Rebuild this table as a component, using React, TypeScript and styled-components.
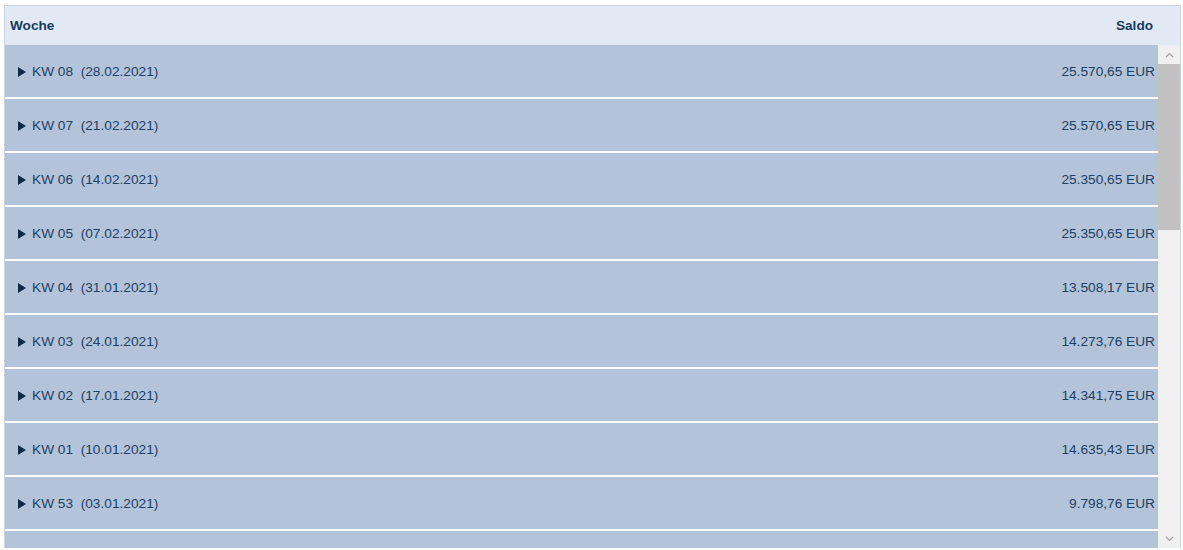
import React from "react";
import styled, { createGlobalStyle } from "styled-components";

const GlobalStyle = createGlobalStyle`
  html, body {
    margin: 0;
    padding: 0;
    background: #ffffff;
    font-family: "Liberation Sans", Arial, sans-serif;
  }
`;

interface Week {
  kw: string;
  date: string;
  saldo: string;
}

const weeks: Week[] = [
  { kw: "08", date: "28.02.2021", saldo: "25.570,65" },
  { kw: "07", date: "21.02.2021", saldo: "25.570,65" },
  { kw: "06", date: "14.02.2021", saldo: "25.350,65" },
  { kw: "05", date: "07.02.2021", saldo: "25.350,65" },
  { kw: "04", date: "31.01.2021", saldo: "13.508,17" },
  { kw: "03", date: "24.01.2021", saldo: "14.273,76" },
  { kw: "02", date: "17.01.2021", saldo: "14.341,75" },
  { kw: "01", date: "10.01.2021", saldo: "14.635,43" },
  { kw: "53", date: "03.01.2021", saldo: "9.798,76" },
  { kw: "52", date: "27.12.2020", saldo: "9.798,76" },
];

const Page = styled.div`
  padding: 5px 2px 0 4px;
`;

const Frame = styled.div`
  width: 1175px;
  height: 542px;
  border: 1px solid #c9d5e3;
  border-bottom: none;
  display: flex;
  flex-direction: column;
  overflow: hidden;
`;

const Header = styled.div`
  height: 39px;
  flex: none;
  display: flex;
  align-items: center;
  justify-content: space-between;
  padding: 0 27px 0 5px;
  background: #e1e9f4;
  color: #173b5c;
  font-size: 13.6px;
  font-weight: bold;
`;

const Body = styled.div`
  flex: 1;
  display: flex;
  min-height: 0;
`;

const List = styled.div`
  flex: 1;
  overflow: hidden;
  display: flex;
  flex-direction: column;
  gap: 2px;
`;

const Row = styled.div`
  height: 52px;
  box-sizing: border-box;
  padding: 1px 3px 0 13px;
  flex: none;
  display: flex;
  align-items: center;
  justify-content: space-between;
  background: #b3c4da;
  color: #1d4062;
  font-size: 13.7px;
`;

const Label = styled.div`
  display: flex;
  align-items: center;
  gap: 5px;
  white-space: pre;
`;

const Caret = styled.span`
  width: 0;
  height: 0;
  border-top: 5px solid transparent;
  border-bottom: 5px solid transparent;
  border-left: 8px solid #102a44;
  margin-right: 1px;
`;

const Scrollbar = styled.div`
  width: 22px;
  flex: none;
  display: flex;
  flex-direction: column;
  background: #f0f0f0;
`;

const ArrowButton = styled.div`
  height: 19px;
  flex: none;
  display: flex;
  align-items: center;
  justify-content: center;
`;

const Track = styled.div`
  flex: 1;
  display: flex;
  flex-direction: column;
`;

const Thumb = styled.div`
  height: 166px;
  background: #c1c1c1;
`;

const Chevron: React.FC<{ up?: boolean }> = ({ up }) => (
  <svg width="9" height="6" viewBox="0 0 9 6">
    <path
      d={up ? "M1 5 L4.5 1.5 L8 5" : "M1 1 L4.5 4.5 L8 1"}
      fill="none"
      stroke="#a3a3a3"
      strokeWidth="1.2"
    />
  </svg>
);

export default function App() {
  return (
    <Page>
      <GlobalStyle />
      <Frame>
        <Header>
          <span>Woche</span>
          <span>Saldo</span>
        </Header>
        <Body>
          <List>
            {weeks.map((w) => (
              <Row key={w.kw + w.date}>
                <Label>
                  <Caret />
                  {`KW ${w.kw}  (${w.date})`}
                </Label>
                <span>{w.saldo} EUR</span>
              </Row>
            ))}
          </List>
          <Scrollbar>
            <ArrowButton>
              <Chevron up />
            </ArrowButton>
            <Track>
              <Thumb />
            </Track>
            <ArrowButton>
              <Chevron />
            </ArrowButton>
          </Scrollbar>
        </Body>
      </Frame>
    </Page>
  );
}
